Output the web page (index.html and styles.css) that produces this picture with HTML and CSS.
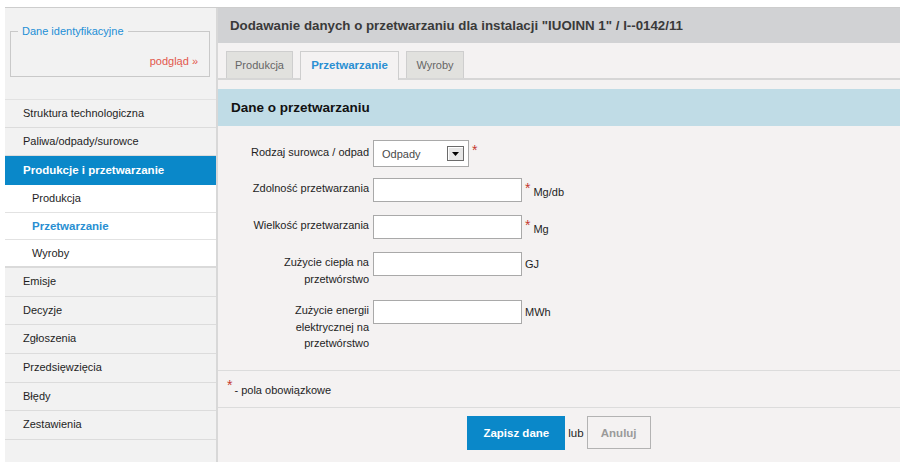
FILE: index.html
```html
<!DOCTYPE html>
<html lang="pl">
<head>
<meta charset="utf-8">
<title>Dodawanie danych o przetwarzaniu</title>
<link rel="stylesheet" href="styles.css">
</head>
<body>
<div class="page">
  <aside class="sidebar">
    <div class="idbox">
      <span class="idbox-legend">Dane identyfikacyjne</span>
      <a class="idbox-link" href="#">podgląd »</a>
    </div>
    <ul class="menu">
      <li class="menu-item">Struktura technologiczna</li>
      <li class="menu-item">Paliwa/odpady/surowce</li>
      <li class="menu-item menu-item-active">Produkcje i przetwarzanie</li>
      <li class="menu-sub">Produkcja</li>
      <li class="menu-sub menu-sub-active">Przetwarzanie</li>
      <li class="menu-sub menu-sub-last">Wyroby</li>
      <li class="menu-item menu-item-low">Emisje</li>
      <li class="menu-item menu-item-low">Decyzje</li>
      <li class="menu-item menu-item-low">Zgłoszenia</li>
      <li class="menu-item menu-item-low">Przedsięwzięcia</li>
      <li class="menu-item menu-item-low">Błędy</li>
      <li class="menu-item menu-item-low">Zestawienia</li>
    </ul>
  </aside>
  <main class="main">
    <header class="header">Dodawanie danych o przetwarzaniu dla instalacji "IUOINN 1" / I--0142/11</header>
    <nav class="tabs">
      <span class="tab tab-prod">Produkcja</span>
      <span class="tab tab-active">Przetwarzanie</span>
      <span class="tab tab-wyr">Wyroby</span>
    </nav>
    <h2 class="section-title">Dane o przetwarzaniu</h2>
    <div class="form">
      <div class="row row-select">
        <label class="lbl">Rodzaj surowca / odpad</label>
        <div class="select">
          <span class="select-value">Odpady</span>
          <span class="select-btn"><svg width="7" height="4" viewBox="0 0 7 4"><path d="M0 0H7L3.5 4Z" fill="#000"/></svg></span>
        </div>
        <span class="req">*</span>
      </div>
      <div class="row">
        <label class="lbl">Zdolność przetwarzania</label>
        <input class="field" type="text">
        <span class="req">*</span>
        <span class="unit">Mg/db</span>
      </div>
      <div class="row">
        <label class="lbl">Wielkość przetwarzania</label>
        <input class="field" type="text">
        <span class="req">*</span>
        <span class="unit">Mg</span>
      </div>
      <div class="row">
        <label class="lbl">Zużycie ciepła na przetwórstwo</label>
        <input class="field" type="text">
        <span class="unit unit-plain">GJ</span>
      </div>
      <div class="row row-last">
        <label class="lbl">Zużycie energii elektrycznej na przetwórstwo</label>
        <input class="field" type="text">
        <span class="unit unit-plain">MWh</span>
      </div>
    </div>
    <div class="note"><span class="note-req">*</span><span class="note-text">- pola obowiązkowe</span></div>
    <div class="actions">
      <button class="btn-save" type="button">Zapisz dane</button>
      <span class="or">lub</span>
      <button class="btn-cancel" type="button">Anuluj</button>
    </div>
  </main>
</div>
</body>
</html>
```
FILE: styles.css
```css
* { box-sizing: border-box; }
html, body { margin: 0; padding: 0; background: #fff; }
body { font-family: "Liberation Sans", Arial, sans-serif; font-size: 11px; color: #1e1e1e; }

.page {
  display: flex;
  margin: 7px 0 0 5px;
  width: 895px;
  height: 455px;
  border-top: 1px solid #cdcdcd;
  overflow: hidden;
}

/* sidebar */
.sidebar {
  width: 213px;
  flex: none;
  background: #f2f2f2;
  border-right: 2px solid #d8d8d8;
}
.idbox {
  position: relative;
  margin: 23px 6px 0 5px;
  height: 46px;
  border: 1px solid #c9c9c9;
  padding: 22px 11px 0 0;
  text-align: right;
}
.idbox-legend {
  position: absolute;
  top: -8px;
  left: 7px;
  padding: 0 4px;
  background: #f2f2f2;
  color: #1d8fd6;
  line-height: 14px;
}
.idbox-link {
  color: #e2574c;
  text-decoration: none;
  line-height: 14px;
}
.menu {
  list-style: none;
  margin: 22px 0 0;
  padding: 0;
  border-top: 1px solid #e2e2e2;
}
.menu-item {
  height: 28px;
  line-height: 27px;
  padding-left: 18px;
  border-bottom: 1px solid #dcdcdc;
  color: #1e1e1e;
}
.menu-item-low { height: 28.7px; }
.menu-item-active {
  background: #0a88c9;
  color: #fff;
  font-weight: bold;
  font-size: 11.5px;
  height: 29px;
  line-height: 29px;
  border-bottom: none;
}
.menu-sub {
  background: #fff;
  height: 27.5px;
  line-height: 27px;
  padding-left: 27px;
  border-bottom: 1px solid #e2e2e2;
}
.menu-sub-active {
  color: #2a8fd2;
  font-weight: bold;
  font-size: 11.5px;
}
.menu-sub-last { border-bottom: 2px solid #dadada; height: 28px; }

/* main */
.main {
  flex: 1;
  background: #f4f2f2;
  display: flex;
  flex-direction: column;
}
.header {
  height: 35px;
  line-height: 35px;
  background: #d1d2d4;
  padding-left: 12px;
  font-size: 13.3px;
  font-weight: bold;
  color: #3a3a3a;
  white-space: nowrap;
}
.tabs {
  display: flex;
  align-items: flex-end;
  gap: 7px;
  height: 37px;
  padding-left: 8px;
  border-bottom: 2px solid #d6d6d6;
}
.tab {
  height: 27px;
  line-height: 27px;
  text-align: center;
  background: #e1e1de;
  border: 1px solid #cecece;
  border-bottom: none;
  color: #666;
}
.tab-prod { width: 67px; }
.tab-wyr { width: 58px; }
.tab-active {
  width: 99px;
  height: 29px;
  margin-bottom: -2px;
  background: #f4f2f2;
  color: #2a8fd2;
  font-weight: bold;
  font-size: 11.5px;
}
.section-title {
  margin: 9px 0 0;
  height: 37px;
  line-height: 37px;
  padding-left: 13px;
  background: #c0dce6;
  font-size: 13.5px;
  font-weight: bold;
  color: #111;
}

/* form */
.form { padding-top: 14px; }
.row {
  display: flex;
  align-items: flex-start;
  margin-bottom: 13px;
}
.row-select { margin-bottom: 11px; }
.row-last { margin-bottom: 0; }
.lbl {
  width: 151px;
  margin-right: 4px;
  padding: 2px 0 0 30px;
  line-height: 16.5px;
  text-align: right;
  color: #1e1e1e;
}
.row-select .lbl { padding-top: 4px; }
.field {
  width: 149px;
  height: 24px;
  margin: 0;
  border: 1px solid #a9a9a9;
  background: #fff;
  font: inherit;
}
.select {
  display: flex;
  align-items: center;
  justify-content: space-between;
  width: 96px;
  height: 27px;
  padding: 0 4px 0 8px;
  border: 1px solid #a9a9a9;
  background: #fff;
}
.select-value { color: #4a4a4a; padding-top: 1px; }
.select-btn {
  display: flex;
  align-items: center;
  justify-content: center;
  width: 17px;
  height: 15px;
  border: 1px solid #6b6b6b;
  background: #e6e6e6;
  box-shadow: inset 1px 1px 0 #fff;
}
.req {
  color: #c4392f;
  font-size: 14px;
  line-height: 14px;
  margin-left: 3px;
  padding-top: 3px;
}
.unit {
  margin-left: 3px;
  padding-top: 7px;
  line-height: 14px;
}
.unit-plain { padding-top: 5px; }

/* footer */
.note {
  margin-top: 18px;
  height: 38px;
  padding: 7px 0 0 9px;
  border-top: 1px solid #dcdcdc;
  border-bottom: 1px solid #dcdcdc;
  display: flex;
  align-items: flex-start;
}
.note-req { color: #c4392f; font-size: 14px; line-height: 14px; margin-right: 2px; }
.note-text { padding-top: 5px; line-height: 14px; }
.actions {
  display: flex;
  justify-content: center;
  align-items: center;
  gap: 3px;
  padding-top: 8px;
}
.btn-save {
  width: 98px;
  height: 34px;
  border: none;
  background: #0a88c9;
  color: #fff;
  font: bold 11.5px "Liberation Sans", Arial, sans-serif;
}
.or { font-size: 11.5px; color: #1e1e1e; }
.btn-cancel {
  width: 64px;
  height: 33px;
  border: 1px solid #b3b3b3;
  background: #f4f2f2;
  color: #9a9a9a;
  font: bold 11.5px "Liberation Sans", Arial, sans-serif;
}
```
